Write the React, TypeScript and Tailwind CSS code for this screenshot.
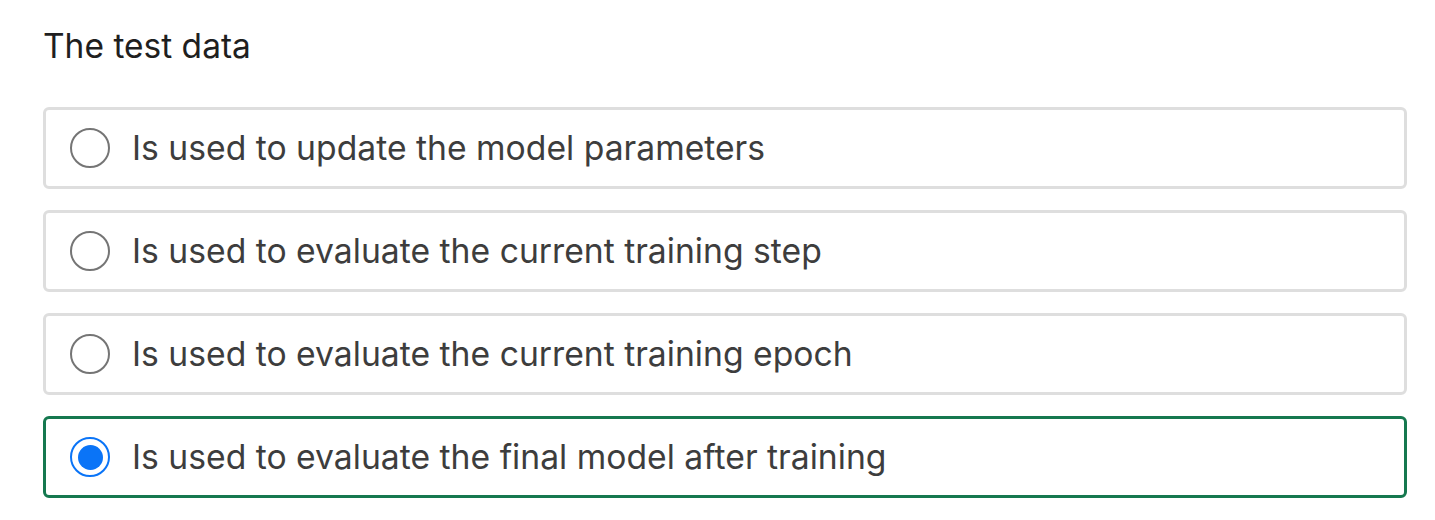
import { useState } from "react";

const options = [
  "Is used to update the model parameters",
  "Is used to evaluate the current training step",
  "Is used to evaluate the current training epoch",
  "Is used to evaluate the final model after training",
];

export default function App() {
  const [selected, setSelected] = useState(3);

  return (
    <div className="min-h-[520px] bg-white pl-[43px] pr-[28px] pt-[24px]" style={{ fontFamily: "Inter, 'Noto Sans', sans-serif" }}>
      <h2 className="text-[33.5px] leading-[44px] text-[#1f1f1f]">The test data</h2>
      <div className="mt-[39px] flex flex-col gap-[21px]">
        {options.map((opt, i) => {
          const active = i === selected;
          return (
            <label
              key={opt}
              onClick={() => setSelected(i)}
              className={`flex h-[82px] cursor-pointer items-center gap-[22px] rounded-[6px] border-[3px] pl-[24px] ${
                active ? "border-[#15784f]" : "border-[#dedede]"
              }`}
            >
              <span
                className={`flex h-[40px] w-[40px] shrink-0 items-center justify-center rounded-full border-[2px] ${
                  active ? "border-[#0a74f7]" : "border-[#757575]"
                }`}
              >
                {active && <span className="h-[25px] w-[25px] rounded-full bg-[#0a74f7]" />}
              </span>
              <span className="text-[33.7px] text-[#3d3d3d]">{opt}</span>
            </label>
          );
        })}
      </div>
    </div>
  );
}
